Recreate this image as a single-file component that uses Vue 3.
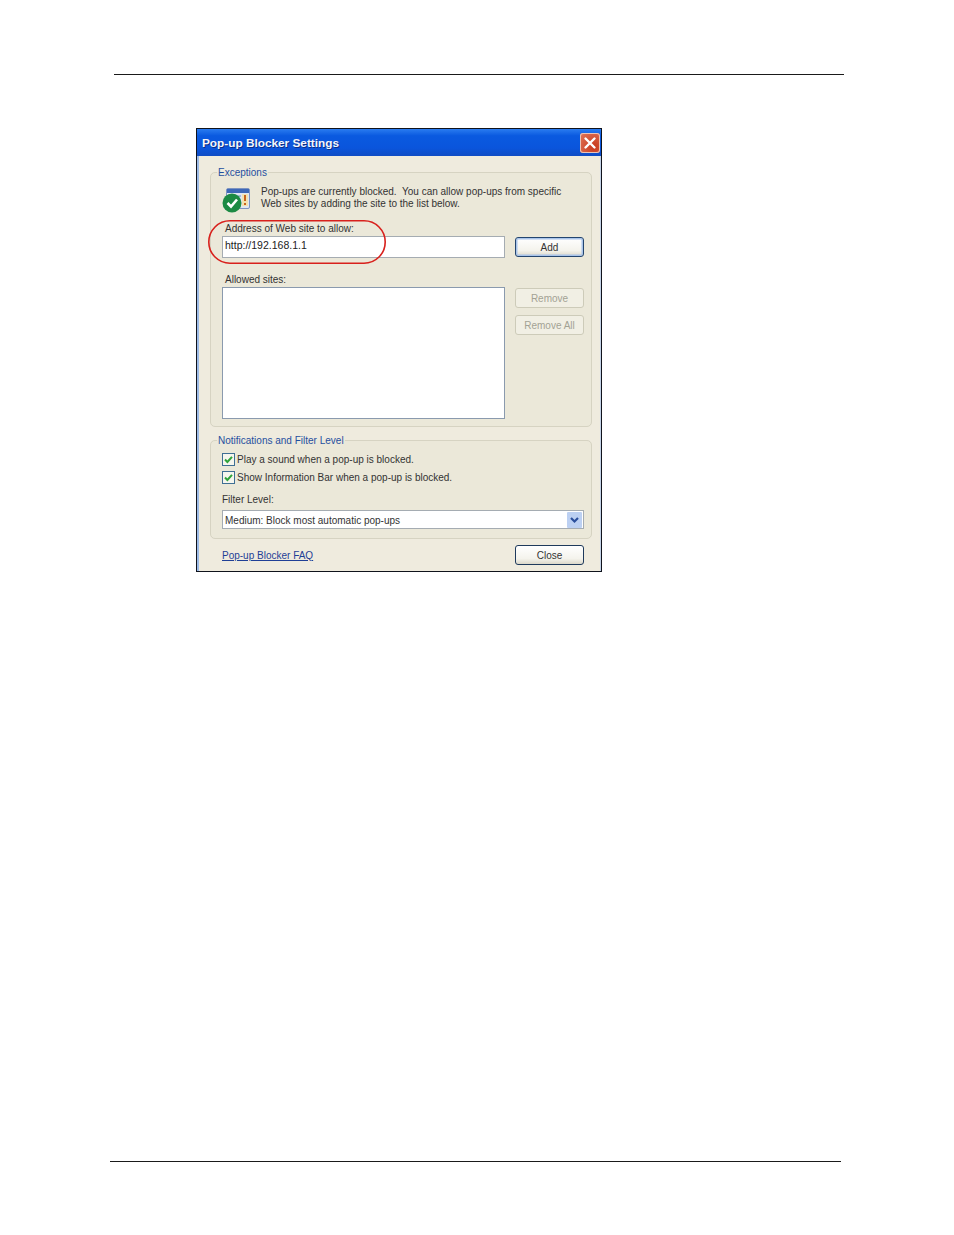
<template>
  <div class="page">
    <div class="rule top-rule"></div>
    <section class="dialog">
      <header class="titlebar">
        <span class="title">Pop-up Blocker Settings</span>
        <span class="close-x">
          <svg width="20" height="20" viewBox="0 0 20 20">
            <path d="M5.5 5.5 L14.5 14.5 M14.5 5.5 L5.5 14.5" stroke="#fff" stroke-width="2.4" stroke-linecap="round" fill="none" />
          </svg>
        </span>
      </header>
      <div class="client">
        <fieldset class="group exceptions">
          <legend>Exceptions</legend>
          <div class="intro">
            <svg class="shield" width="30" height="28" viewBox="0 0 30 28">
              <rect x="4.5" y="1.5" width="23" height="20" rx="1.5" fill="#dfe6f2" stroke="#7d94c0" />
              <rect x="5" y="2" width="22" height="4" fill="#3e68b8" />
              <rect x="8" y="8" width="11" height="2" fill="#a9bbdc" />
              <rect x="20" y="7" width="6" height="12" fill="#f2e2b0" />
              <path d="M23 8 V14 M23 16 V18" stroke="#c9631a" stroke-width="2" />
              <circle cx="10" cy="16" r="9.5" fill="#1c8a44" />
              <path d="M5.5 16 L9 19.5 L15 12.5" stroke="#fff" stroke-width="2.6" fill="none" />
            </svg>
            <p>Pop-ups are currently blocked.&nbsp; You can allow pop-ups from specific<br />Web sites by adding the site to the list below.</p>
          </div>
          <div class="label first-label">Address of Web site to allow:</div>
          <div class="row address-row">
            <div class="field address">http://192.168.1.1</div>
            <div class="btn default">Add</div>
          </div>
          <div class="label sites-label">Allowed sites:</div>
          <div class="row sites-row">
            <div class="field sites"></div>
            <div class="side">
              <div class="btn disabled">Remove</div>
              <div class="btn disabled">Remove All</div>
            </div>
          </div>
          <svg class="ring" width="178" height="44" viewBox="0 0 178 44">
            <rect x="0.8" y="0.8" width="176.4" height="42.4" rx="21.2" fill="none" stroke="#d8201c" stroke-width="1.6" />
          </svg>
        </fieldset>
        <fieldset class="group filter">
          <legend>Notifications and Filter Level</legend>
          <div class="check first-check">
            <svg class="box" width="13" height="13" viewBox="0 0 13 13">
              <rect x="0.5" y="0.5" width="12" height="12" fill="#f6f6ee" stroke="#3f6f94" />
              <path d="M3 6.5 L5.4 9 L10 3.8" stroke="#2fa33a" stroke-width="2" fill="none" />
            </svg>
            <span>Play a sound when a pop-up is blocked.</span>
          </div>
          <div class="check">
            <svg class="box" width="13" height="13" viewBox="0 0 13 13">
              <rect x="0.5" y="0.5" width="12" height="12" fill="#f6f6ee" stroke="#3f6f94" />
              <path d="M3 6.5 L5.4 9 L10 3.8" stroke="#2fa33a" stroke-width="2" fill="none" />
            </svg>
            <span>Show Information Bar when a pop-up is blocked.</span>
          </div>
          <div class="level-label">Filter Level:</div>
          <div class="select">
            <span class="select-text">Medium: Block most automatic pop-ups</span>
            <span class="arrow">
              <svg width="15" height="16" viewBox="0 0 15 16">
                <path d="M4 6 L7.5 9.5 L11 6" stroke="#2b4f9c" stroke-width="2.2" fill="none" />
              </svg>
            </span>
          </div>
        </fieldset>
        <footer class="bottom">
          <a class="faq">Pop-up Blocker FAQ</a>
          <div class="btn">Close</div>
        </footer>
      </div>
    </section>
    <div class="rule bottom-rule"></div>
  </div>
</template>

<script setup>
</script>

<style>
html, body { margin: 0; background: #fff; }
</style>

<style scoped>
.page {
  width: 954px;
  height: 1235px;
  background: #fff;
  overflow: hidden;
  font-family: "Liberation Sans", Arial, sans-serif;
  font-size: 10px;
  color: #333;
}
.rule { height: 1px; background: #1a1a1a; }
.top-rule { width: 730px; margin: 74px 0 0 114px; }
.bottom-rule { width: 731px; margin: 589px 0 0 110px; }
.dialog {
  box-sizing: border-box;
  width: 406px;
  height: 444px;
  margin: 53px 0 0 196px;
  border: 1px solid #10131c;
  background: #efebde;
  display: flex;
  flex-direction: column;
}
.titlebar {
  height: 27px;
  flex: none;
  display: flex;
  align-items: center;
  justify-content: space-between;
  padding: 0 1px 0 5px;
  background: linear-gradient(#2a7cf0 0, #0a5ae0 25%, #0a55dc 70%, #0f4cc4 100%);
}
.title {
  color: #f4f6fb;
  font-weight: 700;
  font-size: 11.8px;
  text-shadow: 1px 1px 0 #0b2f88;
}
.close-x {
  width: 20px;
  height: 20px;
  border-radius: 3px;
  box-shadow: inset 0 0 0 1px #e8c4b8;
  background: radial-gradient(circle at 70% 70%, #c8391c, #e0785c);
  display: block;
}
.close-x svg { display: block; }
.client {
  flex: 1;
  padding: 0 10px 0 11px;
  background: #efebde;
  border-left: 2px solid #9dbbe6;
  border-right: 1px solid #c4d2e6;
}
.group {
  margin: 0;
  padding: 0;
  box-sizing: border-box;
  width: 382px;
  position: relative;
  border: 1px solid #d6d3c2;
  border-radius: 5px;
  background: #ebe8d9;
}
.group legend {
  margin-left: 6px;
  padding: 2px 1px 0;
  color: #1f4f9f;
  font-size: 10px;
  line-height: 12px;
  white-space: nowrap;
}
.exceptions { height: 262px; margin-top: 9px; }
.filter { height: 106px; margin-top: 6px; }
.intro {
  display: flex;
  gap: 9px;
  margin: 6px 0 0 11px;
  height: 34px;
}
.shield { flex: none; margin-top: 2px; }
.intro p {
  margin: 0;
  padding-top: 1px;
  line-height: 12px;
  white-space: nowrap;
}
.label { margin-left: 14px; line-height: 12px; white-space: nowrap; }
.first-label { margin-top: 4px; }
.sites-label { margin-top: 16px; }
.row { display: flex; gap: 10px; margin-left: 11px; }
.address-row { margin-top: 1px; align-items: center; }
.sites-row { margin-top: 1px; align-items: flex-start; }
.field {
  box-sizing: border-box;
  width: 283px;
  flex: none;
  background: #fff;
  border: 1px solid #a5acb2;
}
.address {
  height: 22px;
  line-height: 17px;
  padding-left: 2px;
  font-size: 10.5px;
  color: #222;
}
.sites { height: 132px; border-color: #8a9aae; }
.side { display: flex; flex-direction: column; gap: 7px; margin-top: 1px; }
.btn {
  box-sizing: border-box;
  width: 69px;
  height: 20px;
  line-height: 19px;
  text-align: center;
  border: 1px solid #1f3a5c;
  border-radius: 3px;
  background: linear-gradient(#ffffff, #f4f3ec 70%, #dcd8ca);
  color: #333;
  white-space: nowrap;
}
.default {
  border: 1px solid #23456f;
  box-shadow: inset 0 0 0 1.5px #a9c4ea;
}
.disabled {
  border-color: #cdcbb9;
  background: #f1efe4;
  color: #a3a294;
}
.ring {
  position: absolute;
  left: -3px;
  top: 41px;
  display: block;
  pointer-events: none;
}
.check {
  display: flex;
  align-items: center;
  gap: 2px;
  height: 13px;
  margin: 5px 0 0 11px;
  white-space: nowrap;
}
.first-check { margin-top: 6px; }
.box { flex: none; }
.level-label { margin: 10px 0 0 11px; line-height: 12px; }
.select {
  box-sizing: border-box;
  width: 362px;
  height: 19px;
  margin: 4px 0 0 11px;
  padding: 0 1px 0 2px;
  display: flex;
  align-items: center;
  justify-content: space-between;
  background: #fff;
  border: 1px solid #a5acb2;
  white-space: nowrap;
}
.select-text { padding-top: 2px; }
.arrow {
  width: 15px;
  height: 16px;
  background: #bcd0f2;
  border-radius: 1px;
  display: block;
}
.arrow svg { display: block; }
.bottom {
  display: flex;
  justify-content: space-between;
  align-items: center;
  margin-top: 6px;
  padding: 0 6px 0 12px;
}
.faq {
  color: #1f3f96;
  text-decoration: underline;
  white-space: nowrap;
}
</style>
